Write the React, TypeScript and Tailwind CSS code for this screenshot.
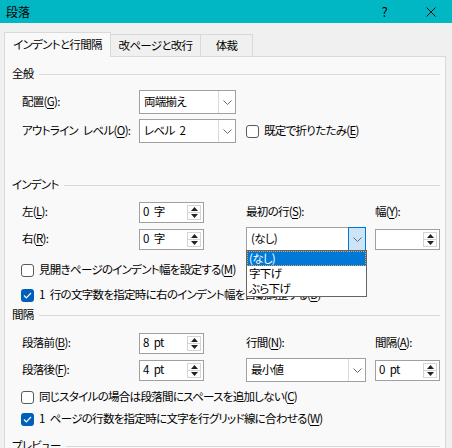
import React from "react";

const font = "[font-family:'Noto_Sans_CJK_JP',sans-serif] [font-feature-settings:'palt'] tracking-[-0.7px]";
const S = "\u2002";

function U({ c }: { c: string }) {
  return <span className="underline underline-offset-2 decoration-1">{c}</span>;
}

function Chevron() {
  return (
    <svg width="9" height="5" viewBox="0 0 9 5" className="block">
      <path d="M0.5 0.5 L4.5 4.5 L8.5 0.5" fill="none" stroke="#6b6b6b" strokeWidth="1" />
    </svg>
  );
}

function Combo({ text, w, active }: { text: string; w: string; active?: boolean }) {
  return (
    <div className={`${w} h-[24px] flex bg-white border border-[#a0a0a0]`}>
      <div className="flex-1 flex items-center pl-[4px] text-[11.5px] leading-none">{text}</div>
      {active ? (
        <div className="flex items-center justify-center bg-[#cce4f7] border border-[#0078d7] -my-px -mr-px w-[18px]">
          <Chevron />
        </div>
      ) : (
        <div className="w-[17px] flex items-center justify-center border-l border-[#dadada]">
          <Chevron />
        </div>
      )}
    </div>
  );
}

function Spin({ text }: { text: string }) {
  return (
    <div className="w-[65px] h-[21px] flex bg-white border border-[#a0a0a0]">
      <div className="flex-1 flex items-center pl-[3px] text-[11.5px] leading-none">{text}</div>
      <div className="w-[14px] my-[2px] mr-[2px] flex flex-col border border-[#d4d4d4]">
        <div className="flex-1 flex items-center justify-center border-b border-[#d4d4d4]">
          <svg width="7" height="4" viewBox="0 0 7 4"><path d="M3.5 0 L7 4 L0 4 Z" fill="#222" /></svg>
        </div>
        <div className="flex-1 flex items-center justify-center">
          <svg width="7" height="4" viewBox="0 0 7 4"><path d="M0 0 L7 0 L3.5 4 Z" fill="#222" /></svg>
        </div>
      </div>
    </div>
  );
}

function Check({ checked, children }: { checked?: boolean; children: React.ReactNode }) {
  return (
    <div className="flex items-center h-[20px] pl-[9px] gap-[5px]">
      {checked ? (
        <div className="w-[13px] h-[13px] rounded-[3px] bg-[#005fb8] flex items-center justify-center">
          <svg width="9" height="7" viewBox="0 0 9 7"><path d="M1 3.5 L3.3 5.8 L8 1" fill="none" stroke="#fff" strokeWidth="1.2" /></svg>
        </div>
      ) : (
        <div className="w-[13px] h-[13px] rounded-[3px] bg-white border border-[#5a5a5a]" />
      )}
      <span className="text-[11.5px] leading-none whitespace-nowrap">{children}</span>
    </div>
  );
}

function Header({ title, mt }: { title: string; mt: string }) {
  return (
    <div className={`${mt} h-[18px] flex items-center gap-[5px]`}>
      <span className="text-[11.5px] leading-none whitespace-nowrap">{title}</span>
      <div className="flex-1 h-px bg-[#d9d9d9] mr-[5px]" />
    </div>
  );
}

function Label({ children, w }: { children: React.ReactNode; w: string }) {
  return <div className={`${w} text-[11.5px] leading-none whitespace-nowrap`}>{children}</div>;
}

export default function App() {
  return (
    <div className={`w-[452px] h-[448px] bg-[#f0f0f0] overflow-hidden text-black ${font}`}>
      <div className="h-[23px] bg-[#00b7c3] flex items-center pl-[6px]">
        <span className="text-[12px] leading-none tracking-normal">段落</span>
        <span className="ml-auto text-[13px] leading-none mr-[39px]">?</span>
        <svg width="10" height="10" viewBox="0 0 10 10" className="mr-[16px]">
          <path d="M0.5 0.5 L9.5 9.5 M9.5 0.5 L0.5 9.5" stroke="#111" strokeWidth="1" />
        </svg>
      </div>

      <div className="h-[33px] flex items-end pl-[4px] relative z-10">
        <div className="w-[107px] h-[25px] -mb-px bg-[#f9f9f9] border border-b-0 border-[#d9d9d9] flex items-center justify-center text-[11.5px] leading-none">
          インデントと行間隔
        </div>
        <div className="w-[90px] h-[22px] border-t border-r border-[#d9d9d9] flex items-center justify-center text-[11.5px] leading-none">
          改ページと改行
        </div>
        <div className="w-[52px] h-[22px] border-t border-r border-[#d9d9d9] flex items-center justify-center text-[11.5px] leading-none">
          体裁
        </div>
      </div>

      <div className="ml-[4px] w-[442px] h-[420px] bg-[#f9f9f9] border border-[#d9d9d9] pl-[7px] relative">
        <Header title="全般" mt="mt-[8px]" />
        <div className="mt-[7px] h-[24px] flex items-center pl-[10px]">
          <Label w="w-[117px]">配置(<U c="G" />):</Label>
          <Combo text="両端揃え" w="w-[97px]" />
        </div>
        <div className="mt-[5px] h-[24px] flex items-center pl-[10px]">
          <Label w="w-[117px]">アウトライン{S}レベル(<U c="O" />):</Label>
          <Combo text={`レベル${S}2`} w="w-[97px]" />
          <div className="ml-[10px] flex items-center gap-[5px]">
            <div className="w-[13px] h-[13px] rounded-[3px] bg-white border border-[#5a5a5a]" />
            <span className="text-[11.5px] leading-none whitespace-nowrap">既定で折りたたみ(<U c="E" />)</span>
          </div>
        </div>

        <Header title="インデント" mt="mt-[33px]" />
        <div className="mt-[6px] h-[24px] flex items-center pl-[10px]">
          <Label w="w-[117px]">左(<U c="L" />):</Label>
          <Spin text={`0${S}字`} />
          <div className="w-[42px]" />
          <Label w="w-[129px]">最初の行(<U c="S" />):</Label>
          <Label w="w-[60px]">幅(<U c="Y" />):</Label>
        </div>
        <div className="mt-[3px] h-[24px] flex items-center pl-[10px]">
          <Label w="w-[117px]">右(<U c="R" />):</Label>
          <Spin text={`0${S}字`} />
          <div className="w-[42px]" />
          <Combo text="(なし)" w="w-[120px]" active />
          <div className="w-[9px]" />
          <Spin text="" />
        </div>
        <div className="mt-[9px]">
          <Check>見開きページのインデント幅を設定する(<U c="M" />)</Check>
        </div>
        <div className="mt-[5px]">
          <Check checked>1{S}行の文字数を指定時に右のインデント幅を自動調整する(<U c="D" />)</Check>
        </div>

        <Header title="間隔" mt="mt-[1px]" />
        <div className="mt-[7px] h-[24px] flex items-center pl-[10px]">
          <Label w="w-[117px]">段落前(<U c="B" />):</Label>
          <Spin text={`8${S}pt`} />
          <div className="w-[42px]" />
          <Label w="w-[129px]">行間(<U c="N" />):</Label>
          <Label w="w-[60px]">間隔(<U c="A" />):</Label>
        </div>
        <div className="mt-[3px] h-[24px] flex items-center pl-[10px]">
          <Label w="w-[117px]">段落後(<U c="F" />):</Label>
          <Spin text={`4${S}pt`} />
          <div className="w-[42px]" />
          <Combo text="最小値" w="w-[120px]" />
          <div className="w-[9px]" />
          <Spin text={`0${S}pt`} />
        </div>
        <div className="mt-[5px]">
          <Check>同じスタイルの場合は段落間にスペースを追加しない(<U c="C" />)</Check>
        </div>
        <div className="mt-[2px]">
          <Check checked>1{S}ページの行数を指定時に文字を行グリッド線に合わせる(<U c="W" />)</Check>
        </div>
        <Header title="プレビュー" mt="mt-[8px]" />

        <div className="absolute left-[241px] top-[193px] w-[121px] h-[47px] bg-white border border-[#646464] z-20 flex flex-col text-[11.5px] leading-none">
          <div className="h-[15px] bg-[#0078d7] text-white border border-dotted border-[#f0a040] flex items-center pl-[1px]">(なし)</div>
          <div className="h-[15px] flex items-center pl-[2px]">字下げ</div>
          <div className="h-[15px] flex items-center pl-[2px]">ぶら下げ</div>
        </div>
      </div>
    </div>
  );
}
